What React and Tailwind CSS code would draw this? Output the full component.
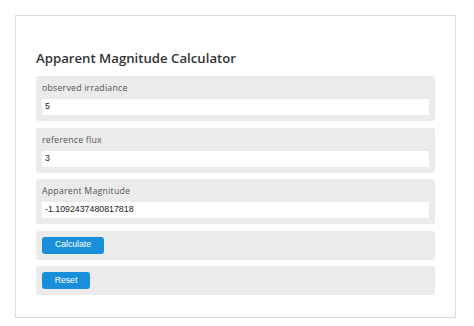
export default function App() {
  const fields = [
    { label: "observed irradiance", value: "5" },
    { label: "reference flux", value: "3" },
    { label: "Apparent Magnitude", value: "-1.1092437480817818" },
  ];
  return (
    <div className="w-[474px] h-[326px] bg-white pt-[15px] pl-[15px]">
      <div className="w-[441px] h-[303px] border border-[#dcdcdc] bg-white px-[20px] pt-[30px]">
        <h1 className="text-[13.2px] leading-[24px] font-semibold text-[#333] mb-[6px]" style={{ fontFamily: '"Open Sans", sans-serif' }}>
          Apparent Magnitude Calculator
        </h1>
        <div className="flex flex-col gap-[6.5px]">
          {fields.map((f) => (
            <div key={f.label} className="h-[45px] bg-[#ebebeb] rounded-[3px] px-[6px] pt-[4px]">
              <div className="text-[8.8px] leading-[16px] text-[#555] tracking-[0.2px]" style={{ fontFamily: '"Open Sans", sans-serif' }}>{f.label}</div>
              <div className="mt-[3px] h-[16px] bg-white flex items-center px-[3px] text-[8.8px] text-[#222]" style={{ fontFamily: '"Liberation Sans", Arial, sans-serif' }}>
                {f.value}
              </div>
            </div>
          ))}
          <div className="h-[29px] bg-[#ebebeb] rounded-[3px] px-[6px] pt-[6px]">
            <div className="w-[62px] h-[17px] rounded-[3px] bg-[#1a8fd9] text-white text-[8.7px] flex items-center justify-center" style={{ fontFamily: '"Liberation Sans", Arial, sans-serif' }}>Calculate</div>
          </div>
          <div className="h-[29px] bg-[#ebebeb] rounded-[3px] px-[6px] pt-[6px]">
            <div className="w-[48px] h-[17px] rounded-[3px] bg-[#1a8fd9] text-white text-[8.7px] flex items-center justify-center" style={{ fontFamily: '"Liberation Sans", Arial, sans-serif' }}>Reset</div>
          </div>
        </div>
      </div>
    </div>
  );
}
